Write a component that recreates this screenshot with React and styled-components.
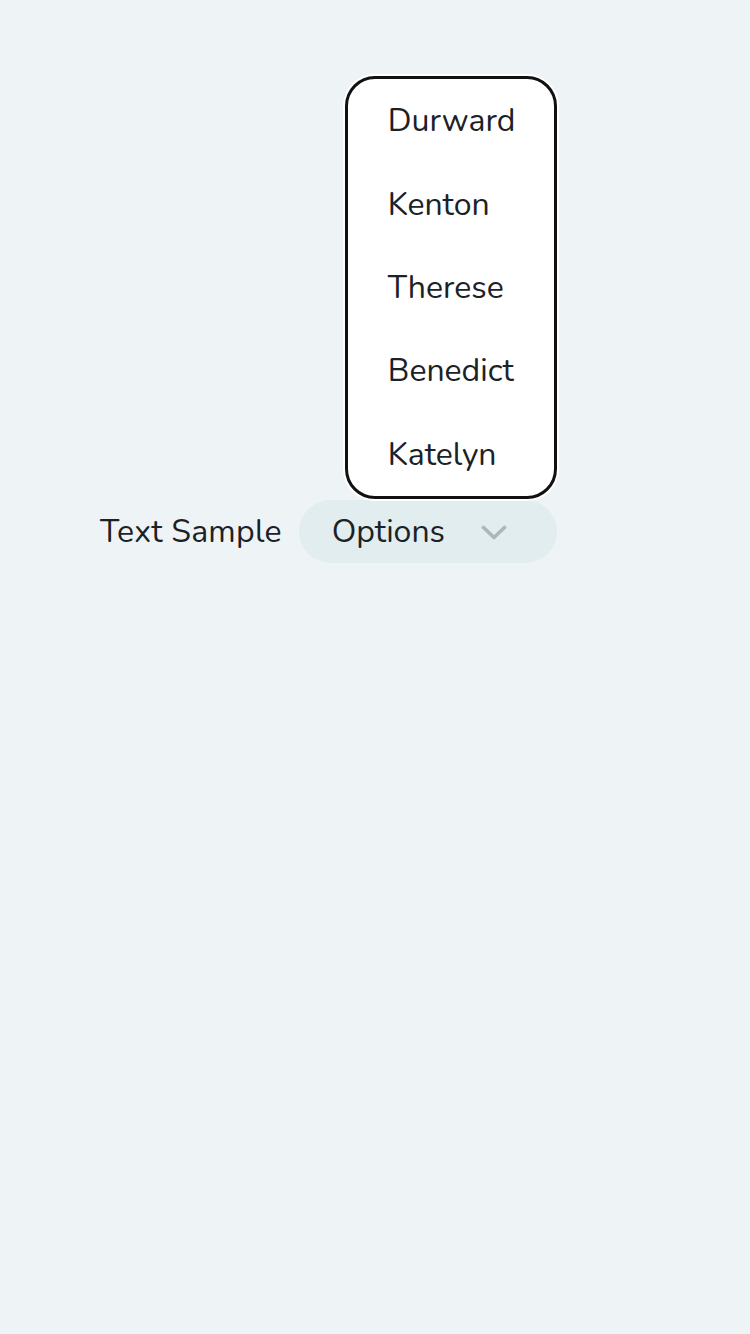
import React, {useState} from 'react'
import styled, {createGlobalStyle} from 'styled-components'

const GlobalStyle = createGlobalStyle`
    html, body{
        margin:0;
        padding:0;
        background:#eef3f6;
    }
    body{
        font-family:"Nunito","Noto Sans","Open Sans",sans-serif;
        color:#1b2226;
    }
`

const names = ['Durward','Kenton','Therese','Benedict','Katelyn']

function App() {
    const [open] = useState(true);
    return (
        <Page>
            <GlobalStyle/>
            <Row>
                <Label>Text Sample</Label>
                <SelectWrap>
                    {open && (
                        <Menu>
                            {names.map(n => <Item key={n}>{n}</Item>)}
                        </Menu>
                    )}
                    <Trigger>
                        <span>Options</span>
                        <Chevron viewBox="0 0 26 16" width="26" height="16">
                            <path d="M2.5 2.5 L13 12.5 L23.5 2.5" fill="none" stroke="currentColor" strokeWidth="3.6" strokeLinecap="round" strokeLinejoin="round"/>
                        </Chevron>
                    </Trigger>
                </SelectWrap>
            </Row>
        </Page>
    )
}

export default App

const Page = styled.div`
    width:750px;
    height:1334px;
    background:#eef3f6;
    box-sizing:border-box;
    padding-top:500px;
`
const Row = styled.div`
    display:flex;
    align-items:center;
    gap:17px;
    padding-left:100px;
`
const Label = styled.span`
    font-size:32px;
    letter-spacing:0.25px;
`
const SelectWrap = styled.div`
    position:relative;
`
const Trigger = styled.button`
    display:flex;
    align-items:center;
    justify-content:space-between;
    width:258px;
    height:63px;
    box-sizing:border-box;
    padding:0 50px 0 33px;
    border:none;
    border-radius:32px;
    background:#e1edef;
    font-family:inherit;
    font-size:32px;
    color:#1b2226;
    cursor:pointer;
`
const Chevron = styled.svg`
    color:#a9b8bc;
    margin-top:2px;
`
const Menu = styled.ul`
    position:absolute;
    right:0;
    bottom:64px;
    width:212px;
    box-sizing:border-box;
    margin:0;
    padding:0;
    list-style:none;
    background:#ffffff;
    border:3px solid #111111;
    border-radius:30px;
    box-shadow:0 0 0 2px #ffffff;
`
const Item = styled.li`
    height:83.4px;
    display:flex;
    align-items:center;
    padding-left:40px;
    font-size:32px;
    color:#1b2226;
`
